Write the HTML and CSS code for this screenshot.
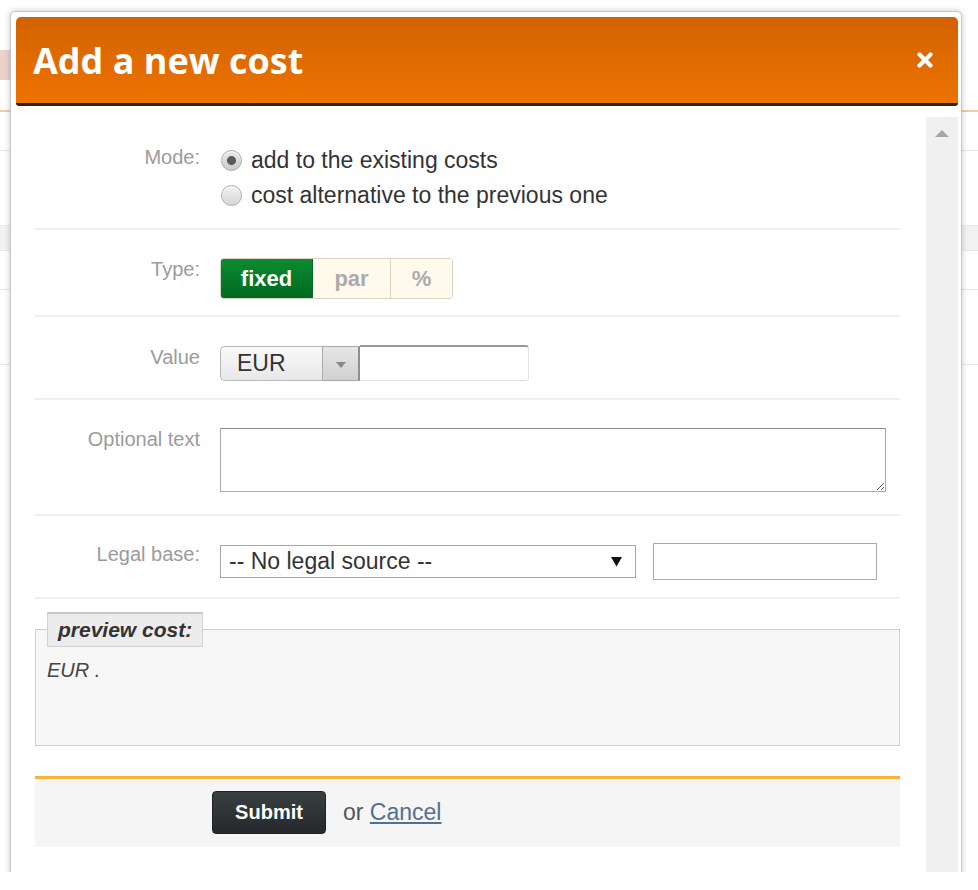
FILE: index.html
```html
<!DOCTYPE html>
<html lang="en">
<head>
<meta charset="utf-8">
<title>Add a new cost</title>
<link rel="stylesheet" href="styles.css">
</head>
<body>
<div class="page">
  <div class="page-top">
    <div class="page-tab"></div>
  </div>
  <div class="page-row"></div>
  <div class="page-row page-row-tall"></div>
  <div class="page-row page-row-gray"></div>
  <div class="page-row"></div>
  <div class="page-row page-row-tall"></div>

  <div class="dialog">
    <div class="dlg-head">
      <h1 class="dlg-title">Add a new cost</h1>
      <svg class="dlg-close" width="16" height="16" viewBox="0 0 16 16" aria-label="close">
        <path d="M2.5 2.5 L13.5 13.5 M13.5 2.5 L2.5 13.5" stroke="#fff" stroke-width="4.2" stroke-linecap="round"/>
      </svg>
    </div>
    <div class="dlg-body">
      <form class="main">
        <div class="row row-mode">
          <div class="label">Mode:</div>
          <div class="control">
            <label class="radio-line"><input type="radio" name="mode" checked> add to the existing costs</label>
            <label class="radio-line"><input type="radio" name="mode"> cost alternative to the previous one</label>
          </div>
        </div>
        <div class="row row-type">
          <div class="label">Type:</div>
          <div class="control">
            <div class="seg">
              <span class="seg-btn seg-fixed">fixed</span>
              <span class="seg-btn seg-par">par</span>
              <span class="seg-btn seg-pct">%</span>
            </div>
          </div>
        </div>
        <div class="row row-value">
          <div class="label">Value</div>
          <div class="control control-inline">
            <div class="combo">
              <span class="combo-cur">EUR</span>
              <span class="combo-arrow"><svg width="10" height="6" viewBox="0 0 10 6"><path d="M0 0 H10 L5 6 Z" fill="#8a8a8a"/></svg></span>
            </div>
            <input class="combo-input" type="text">
          </div>
        </div>
        <div class="row row-text">
          <div class="label">Optional text</div>
          <div class="control">
            <textarea class="txt"></textarea>
          </div>
        </div>
        <div class="row row-legal">
          <div class="label">Legal base:</div>
          <div class="control control-inline">
            <div class="select">
              <span class="select-text">-- No legal source --</span>
              <svg class="select-arrow" width="11" height="11" viewBox="0 0 11 11"><path d="M0 1 H11 L5.5 10.5 Z" fill="#111"/></svg>
            </div>
            <input class="legal-input" type="text">
          </div>
        </div>
        <fieldset class="preview">
          <legend class="preview-legend">preview cost:</legend>
          <div class="preview-text">EUR .</div>
        </fieldset>
        <div class="footer">
          <button type="button" class="submit">Submit</button>
          <span class="or">or <a href="#" class="cancel">Cancel</a></span>
        </div>
      </form>
      <div class="scroll">
        <span class="scroll-up"></span>
      </div>
    </div>
  </div>
</div>
</body>
</html>
```

FILE: styles.css
```css
html, body {
  margin: 0;
  background: #fff;
}

body {
  font-family: "Liberation Sans", Arial, sans-serif;
  color: #333;
}

.page {
  position: relative;
  height: 872px;
  overflow: hidden;
  background: #fff;
}

.page-top {
  height: 112px;
  border-bottom: 2px solid #f7cb9f;
  box-sizing: border-box;
  padding-top: 50px;
}

.page-tab {
  width: 60px;
  height: 30px;
  background: #ebd3cc;
}

.page-row {
  height: 38px;
  border-bottom: 1px solid #e9e9e9;
}

.page-row-tall {
  height: 74px;
}

.page-row-gray {
  background: #f2f2f2;
  height: 24px;
}

.dialog {
  position: absolute;
  left: 10px;
  top: 11px;
  width: 952px;
  height: 880px;
  box-sizing: border-box;
  border: 1px solid #c6c6c6;
  border-radius: 5px;
  padding: 5px 3px 0 5px;
  background: #fff;
  box-shadow: 0 0 6px rgba(0, 0, 0, 0.22);
  display: flex;
  flex-direction: column;
}

.dlg-head {
  height: 89px;
  box-sizing: border-box;
  flex: none;
  border-bottom: 3px solid #262626;
  border-radius: 5px 5px 3px 3px;
  background: linear-gradient(#d26200, #ed7300);
  display: flex;
  align-items: center;
  justify-content: space-between;
  padding: 0 25px 0 17px;
}

.dlg-title {
  margin: 0;
  font-family: "Open Sans", "DejaVu Sans", sans-serif;
  font-weight: 700;
  font-size: 36px;
  line-height: 40px;
  color: #fff;
  letter-spacing: 0;
  padding-top: 2px;
}

.dlg-close {
  display: block;
  margin-bottom: 1px;
}

.dlg-body {
  flex: 1;
  display: flex;
  margin-top: 11px;
  min-height: 0;
}

.main {
  flex: 1;
  padding: 0 26px 0 19px;
  margin: 0;
}

.scroll {
  width: 32px;
  flex: none;
  background: #f0f0f0;
}

.scroll-up {
  display: block;
  width: 0;
  height: 0;
  margin: 13px auto 0;
  border-left: 7px solid transparent;
  border-right: 7px solid transparent;
  border-bottom: 7px solid #a6a6a6;
}

.row {
  display: grid;
  grid-template-columns: 165px 1fr;
  column-gap: 20px;
  border-bottom: 2px solid #efefef;
  align-items: start;
}

.row-mode { padding: 26px 0 15px; }
.row-type { padding: 28px 0 16px; }
.row-value { padding: 29px 0 17px; }
.row-text { padding: 28px 0 22px; }
.row-legal { padding: 27px 0 17px; }

.label {
  color: #9b9b9b;
  font-size: 20px;
  line-height: 23px;
  text-align: right;
  padding-top: 0;
}

.row-mode .label {
  padding-top: 3px;
}

.control-inline {
  display: flex;
  align-items: center;
}

.radio-line {
  display: flex;
  align-items: center;
  gap: 9px;
  height: 35px;
  font-size: 23px;
  color: #333;
}

.radio-line input {
  appearance: none;
  -webkit-appearance: none;
  width: 21px;
  height: 21px;
  margin: 0 0 0 1px;
  box-sizing: border-box;
  border: 1px solid #ababab;
  border-radius: 50%;
  background: linear-gradient(#f2f2f2, #d6d6d6);
  box-shadow: inset 0 1px 1px rgba(255, 255, 255, 0.8);
}

.radio-line input:checked {
  background: radial-gradient(circle, #5a5a5a 0 4px, rgba(90, 90, 90, 0) 5px), linear-gradient(#e8e8e8, #cdcdcd);
}

.seg {
  display: inline-flex;
  height: 41px;
  border-radius: 4px;
  overflow: hidden;
  border: 1px solid #d9d3c4;
  box-sizing: border-box;
}

.seg-btn {
  display: flex;
  align-items: center;
  justify-content: center;
  font-weight: 700;
  font-size: 22px;
  box-sizing: border-box;
  background: #fffaeb;
  color: #ababab;
}

.seg-fixed {
  width: 93px;
  background: linear-gradient(#0b8b31, #006a1f);
  color: #fff;
  margin: -1px 0 -1px -1px;
  border: 1px solid #056b24;
  border-radius: 4px 0 0 4px;
}

.seg-par {
  width: 77px;
}

.seg-pct {
  width: 62px;
  border-left: 1px solid #dcd6c8;
}

.combo {
  display: flex;
  height: 35px;
}

.combo-cur {
  width: 102px;
  box-sizing: border-box;
  border: 1px solid #b9b9b9;
  border-right: none;
  border-radius: 5px 0 0 5px;
  background: linear-gradient(#f8f8f8, #e8e8e8);
  font-size: 23px;
  color: #333;
  padding-left: 16px;
  display: flex;
  align-items: center;
}

.combo-arrow {
  width: 38px;
  box-sizing: border-box;
  border: 1px solid #a9a9a9;
  border-right: 2px solid #8f8f8f;
  background: linear-gradient(#e6e6e6, #d0d0d0);
  display: flex;
  align-items: center;
  justify-content: center;
  padding-top: 3px;
}

.combo-input {
  width: 169px;
  height: 36px;
  box-sizing: border-box;
  margin: -1px 0 0;
  border: 1px solid #e2e2e2;
  border-top: 2px solid #9a9a9a;
  border-left: none;
  border-radius: 0 3px 3px 0;
  background: #fff;
  padding: 0 4px;
  font: 22px "Liberation Sans", Arial, sans-serif;
}

.txt {
  display: block;
  width: 666px;
  height: 64px;
  box-sizing: border-box;
  margin: 0;
  border: 1px solid #a9a9a9;
  border-top-color: #8f8f8f;
  padding: 2px 4px;
  font: 20px "Liberation Sans", Arial, sans-serif;
  background: #fff;
}

.select {
  width: 416px;
  height: 33px;
  box-sizing: border-box;
  border: 1px solid #a6a6a6;
  display: flex;
  align-items: center;
  justify-content: space-between;
  padding: 0 13px 0 8px;
  background: #fff;
}

.select-text {
  font-size: 23px;
  color: #333;
}

.select-arrow {
  display: block;
}

.legal-input {
  width: 224px;
  height: 37px;
  box-sizing: border-box;
  margin: 0 0 0 17px;
  border: 1px solid #a9a9a9;
  padding: 0 4px;
  font: 22px "Liberation Sans", Arial, sans-serif;
  background: #fff;
}

.preview {
  margin: 13px 0 0;
  height: 134px;
  box-sizing: border-box;
  border: 1px solid #cfcfcf;
  background: #f7f7f7;
  padding: 11px 11px 0;
}

.preview-legend {
  padding: 0 10px;
  height: 35px;
  box-sizing: border-box;
  background: #ececec;
  border: 1px solid #d2d2d2;
  border-top: 2px solid #c7c7c7;
  font-weight: 700;
  font-style: italic;
  font-size: 21px;
  line-height: 31px;
  color: #333;
}

.preview-text {
  font-style: italic;
  font-size: 20px;
  line-height: 24px;
  color: #444;
}

.footer {
  margin-top: 30px;
  height: 71px;
  box-sizing: border-box;
  border-top: 3px solid #f8b23a;
  background: #f5f5f5;
  padding: 12px 0 0 177px;
  display: flex;
  align-items: flex-start;
}

.submit {
  width: 114px;
  height: 43px;
  margin: 0;
  border: 1px solid #1e2224;
  border-radius: 4px;
  background: linear-gradient(#3a3f41, #25292b);
  color: #fff;
  font: 700 20px "Liberation Sans", Arial, sans-serif;
  padding: 0;
}

.or {
  margin-left: 17px;
  font-size: 23px;
  line-height: 43px;
  color: #555;
}

.cancel {
  color: #52708f;
  text-decoration: underline;
}
```
